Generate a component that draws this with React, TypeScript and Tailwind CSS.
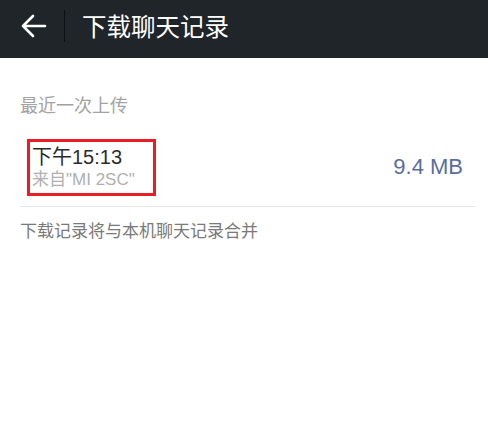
import React from "react";

export default function App() {
  return (
    <div
      className="w-[488px] h-[428px] bg-white overflow-hidden"
      style={{ fontFamily: '"Liberation Sans", "Noto Sans CJK SC", sans-serif' }}
    >
      <div className="h-[58px] bg-[#202529] flex items-center">
        <div className="w-[64px] h-full flex items-center justify-center">
          <svg width="26" height="24" viewBox="0 0 26 24" fill="none" className="ml-[4px] mb-[6px]">
            <path d="M2 12 H24 M12 2 L2 12 L12 22" stroke="white" strokeWidth="2.6" strokeLinecap="round" strokeLinejoin="round" />
          </svg>
        </div>
        <div className="w-px h-[32px] bg-[#0d1012] mb-[6px]" />
        <div className="ml-[17px] text-[24.5px] text-white leading-none mb-[2px]">下载聊天记录</div>
      </div>
      <div className="pl-[20px] pr-[13px]">
        <div className="pt-[39px] text-[18px] text-[#a3a3a3] leading-none">最近一次上传</div>
        <div className="flex items-center justify-between mt-[24px] pb-[10px] border-b border-[#e6e6e6]">
          <div className="ml-[7px] border-[3px] border-[#ec1c24] w-[129px] h-[57px] pl-[2px] pt-[4px]">
            <div className="text-[20px] text-[#2b2b2b] leading-[23px]">下午15:13</div>
            <div className="text-[17px] text-[#b0b0b0] leading-[22px]">来自"MI 2SC"</div>
          </div>
          <div className="text-[22px] text-[#5a6d9c] mr-[12px] mb-[2px]">9.4 MB</div>
        </div>
        <div className="pt-[16px] text-[17px] text-[#7a7a7a] leading-none">下载记录将与本机聊天记录合并</div>
      </div>
    </div>
  );
}
